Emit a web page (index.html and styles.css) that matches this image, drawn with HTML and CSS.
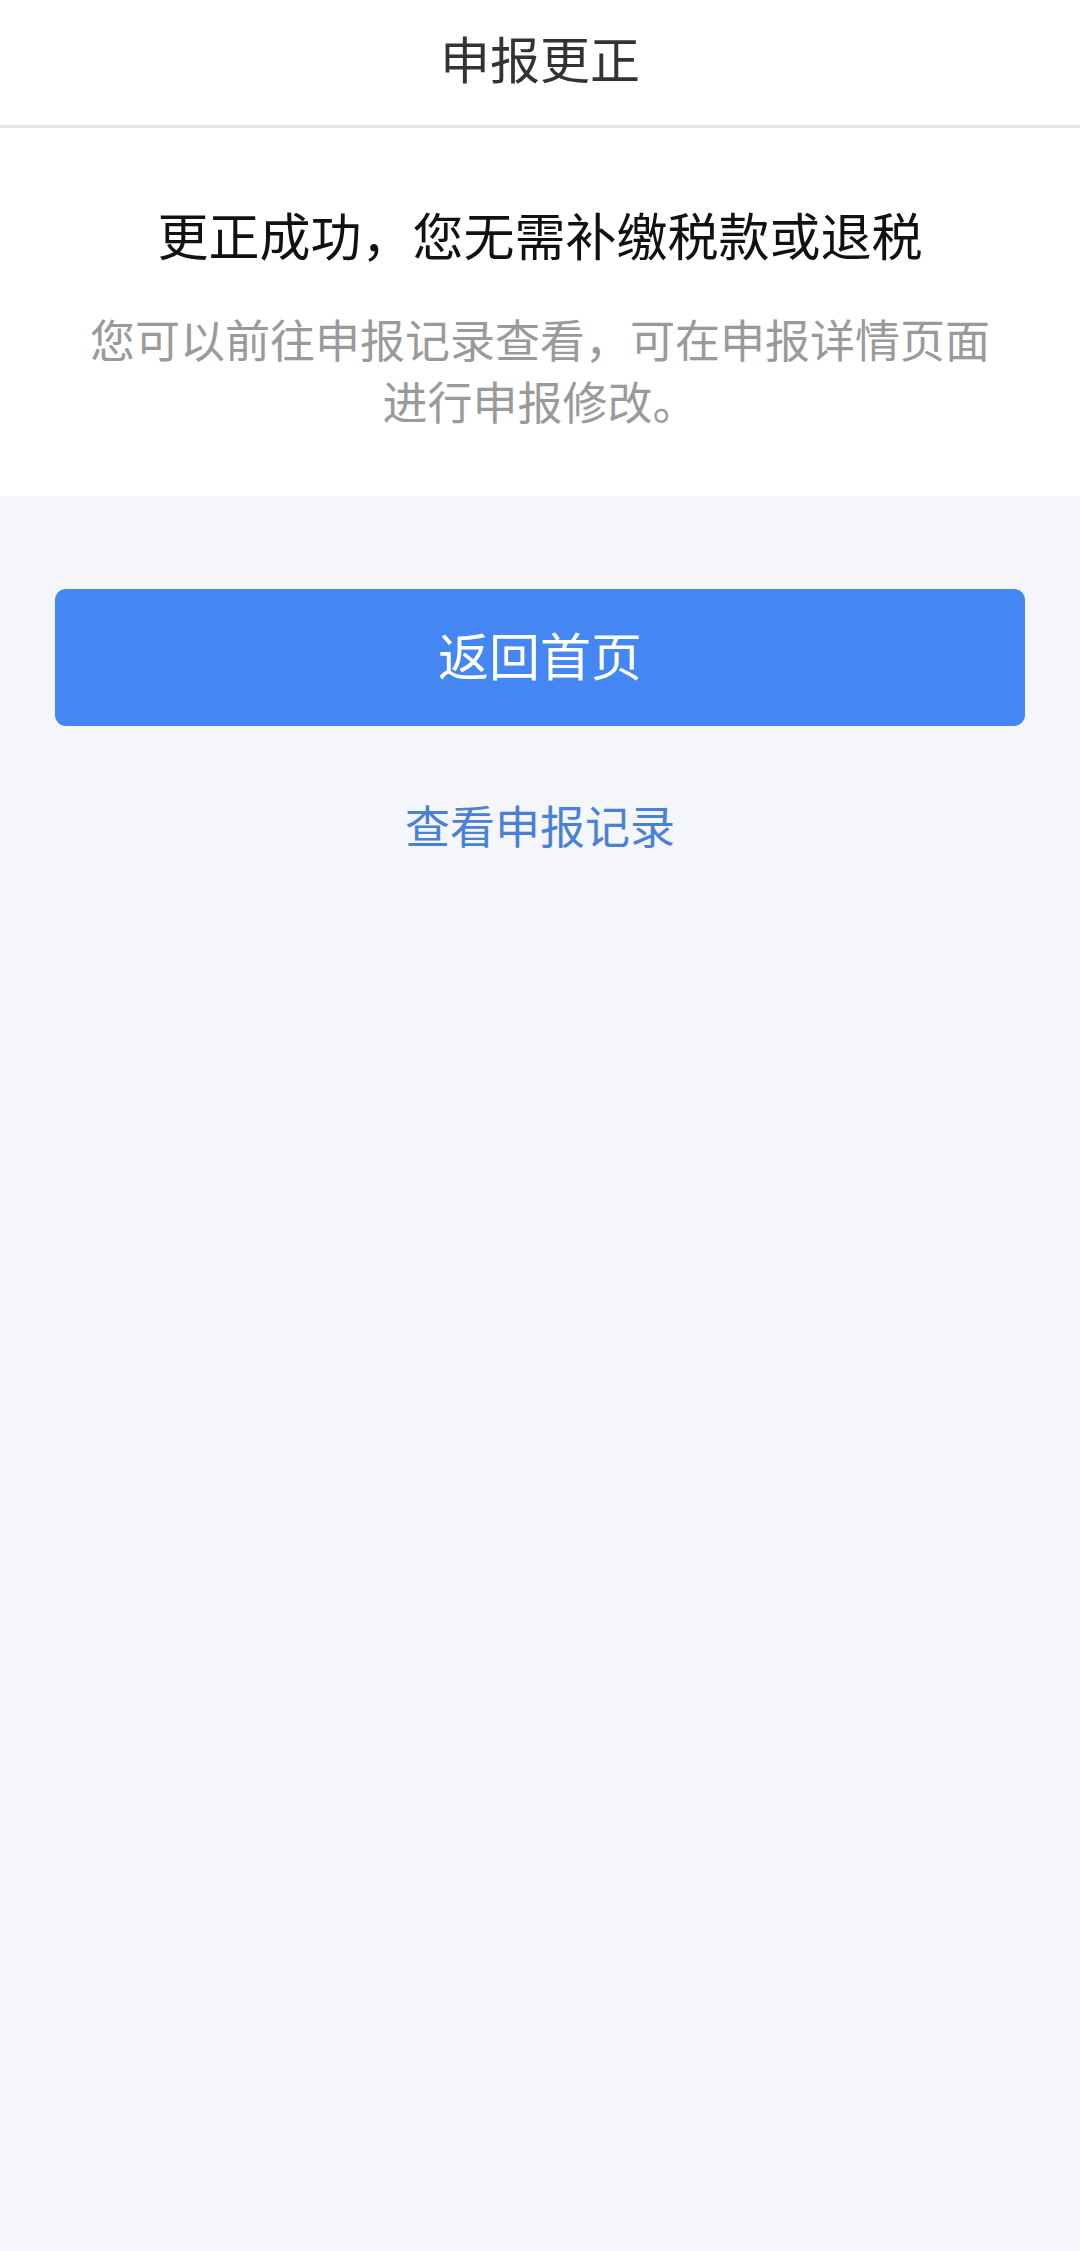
FILE: index.html
```html
<!DOCTYPE html>
<html lang="zh-CN">
<head>
  <meta charset="UTF-8" />
  <meta name="viewport" content="width=device-width, initial-scale=1.0"/>
  <title>申报更正</title>
  <link rel="stylesheet" href="styles.css">
</head>
<body>
  <div class="header">
    <h1>申报更正</h1>
  </div>

  <div class="result">
    <h2>更正成功，您无需补缴税款或退税</h2>
    <p>您可以前往申报记录查看，可在申报详情页面进行申报修改。</p>
  </div>

  <div class="actions">
    <button class="primary">返回首页</button>
    <a class="link" href="#">查看申报记录</a>
  </div>
</body>
</html>
```

FILE: styles.css
```css
body {
  font-family: "Noto Sans CJK SC", "Noto Sans", sans-serif;
  background-color: #f4f6fa;
  margin: 0;
  min-height: 100vh;
}

.header {
  background: white;
  height: 125px;
  border-bottom: 3px solid #e3e3e3;
  display: flex;
  justify-content: center;
  align-items: center;
}

.header h1 {
  margin: 0;
  font-size: 50px;
  font-weight: normal;
  color: #333;
  line-height: 1;
  margin-top: -11px;
}

.result {
  background: white;
  padding: 71px 80px 64px;
  text-align: center;
}

.result h2 {
  margin: 0 0 39px;
  font-size: 51px;
  line-height: 70px;
  font-weight: normal;
  color: #111;
}

.result p {
  margin: 0;
  font-size: 45px;
  line-height: 62px;
  color: #9a9a9a;
}

.actions {
  padding: 93px 55px 0;
  display: flex;
  flex-direction: column;
  align-items: center;
}

.primary {
  width: 100%;
  height: 137px;
  padding: 0 0 8px;
  background-color: #4587f2;
  color: white;
  font-family: inherit;
  font-size: 51px;
  border: none;
  border-radius: 11px;
  cursor: pointer;
}

.link {
  margin-top: 69px;
  font-size: 45px;
  line-height: 60px;
  color: #4a80d6;
  text-decoration: none;
}
```
